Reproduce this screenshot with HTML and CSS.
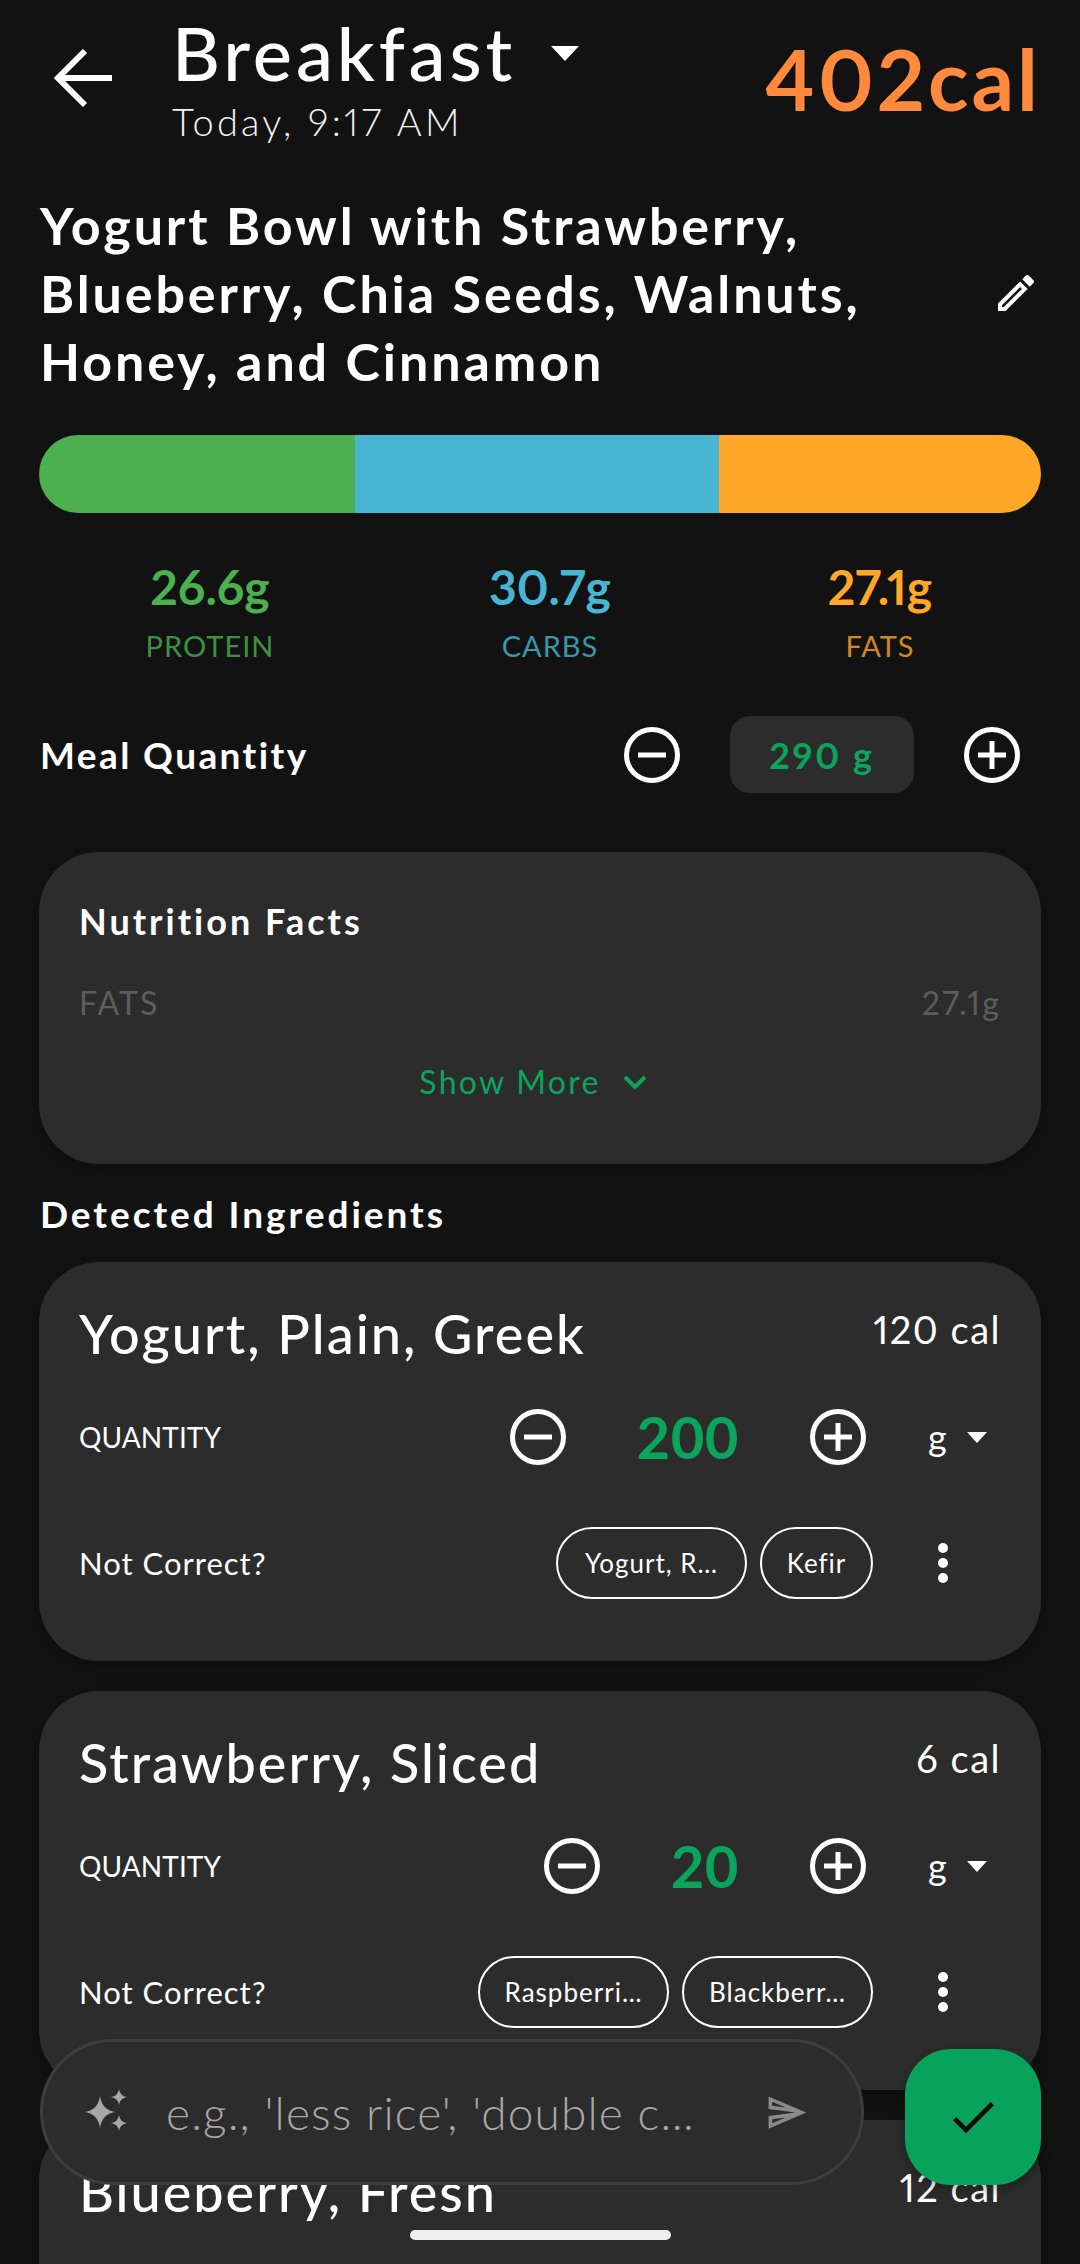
FILE: index.html
```html
<!DOCTYPE html>
<html lang="en">
<head>
<meta charset="utf-8">
<title>Breakfast</title>
<link rel="stylesheet" href="styles.css">
</head>
<body>
<main class="screen">
  <header class="header">
    <svg class="back" viewBox="0 0 60 60"><path d="M58 29H4M31 2L4 29l27 27"/></svg>
    <div class="meal-head">
      <div class="meal-line"><span class="meal-name">Breakfast</span><span class="caret caret-lg"></span></div>
      <div class="meal-time">Today, 9:17 AM</div>
    </div>
    <div class="meal-cal">402cal</div>
  </header>

  <section class="title-row">
    <h1 class="title">Yogurt Bowl with Strawberry,<br>Blueberry, Chia Seeds, Walnuts,<br>Honey, and Cinnamon</h1>
    <svg class="edit" viewBox="0 0 24 24"><path d="M14.06 9.02l.92.92L5.92 19H5v-.92l9.06-9.06M17.66 3c-.25 0-.51.1-.7.29l-1.83 1.83 3.75 3.75 1.83-1.83c.39-.39.39-1.02 0-1.41l-2.34-2.34c-.2-.2-.45-.29-.71-.29zm-3.6 3.19L3 17.25V21h3.75L17.81 9.94l-3.75-3.75z"/></svg>
  </section>

  <div class="macro-bar"><span class="seg seg-p"></span><span class="seg seg-c"></span><span class="seg seg-f"></span></div>

  <section class="stats">
    <div class="stat stat-p"><div class="stat-val">26.6g</div><div class="stat-lbl">PROTEIN</div></div>
    <div class="stat stat-c"><div class="stat-val">30.7g</div><div class="stat-lbl">CARBS</div></div>
    <div class="stat stat-f"><div class="stat-val">27.1g</div><div class="stat-lbl">FATS</div></div>
  </section>

  <section class="meal-qty">
    <div class="heading heading-meal">Meal Quantity</div>
    <div class="meal-stepper">
      <svg class="step" viewBox="0 0 56 56"><circle cx="28" cy="28" r="25.5"/><path d="M14 28h28"/></svg>
      <div class="qty-pill">290 g</div>
      <svg class="step" viewBox="0 0 56 56"><circle cx="28" cy="28" r="25.5"/><path d="M14 28h28M28 14v28"/></svg>
    </div>
  </section>

  <section class="card facts">
    <div class="facts-title">Nutrition Facts</div>
    <div class="facts-row"><span>FATS</span><span>27.1g</span></div>
    <div class="show-more"><span>Show More</span><svg class="chev" viewBox="0 0 24 16"><path d="M2 3l10 10L22 3"/></svg></div>
  </section>

  <h2 class="heading detected">Detected Ingredients</h2>

  <article class="card ing">
    <div class="ing-top"><div class="ing-name">Yogurt, Plain, Greek</div><div class="ing-cal">120 cal</div></div>
    <div class="ing-qty">
      <div class="qty-lbl">QUANTITY</div>
      <svg class="step" viewBox="0 0 56 56"><circle cx="28" cy="28" r="25.5"/><path d="M14 28h28"/></svg>
      <div class="qty-val">200</div>
      <svg class="step" viewBox="0 0 56 56"><circle cx="28" cy="28" r="25.5"/><path d="M14 28h28M28 14v28"/></svg>
      <div class="unit"><span>g</span><span class="caret"></span></div>
    </div>
    <div class="ing-alt">
      <div class="alt-lbl">Not Correct?</div>
      <div class="chip chip-a">Yogurt, R…</div>
      <div class="chip chip-b">Kefir</div>
      <svg class="dots" viewBox="0 0 12 40"><circle cx="6" cy="5" r="5"/><circle cx="6" cy="20" r="5"/><circle cx="6" cy="35" r="5"/></svg>
    </div>
  </article>

  <article class="card ing">
    <div class="ing-top"><div class="ing-name">Strawberry, Sliced</div><div class="ing-cal">6 cal</div></div>
    <div class="ing-qty">
      <div class="qty-lbl">QUANTITY</div>
      <svg class="step" viewBox="0 0 56 56"><circle cx="28" cy="28" r="25.5"/><path d="M14 28h28"/></svg>
      <div class="qty-val">20</div>
      <svg class="step" viewBox="0 0 56 56"><circle cx="28" cy="28" r="25.5"/><path d="M14 28h28M28 14v28"/></svg>
      <div class="unit"><span>g</span><span class="caret"></span></div>
    </div>
    <div class="ing-alt">
      <div class="alt-lbl">Not Correct?</div>
      <div class="chip chip-c">Raspberri…</div>
      <div class="chip chip-c">Blackberr…</div>
      <svg class="dots" viewBox="0 0 12 40"><circle cx="6" cy="5" r="5"/><circle cx="6" cy="20" r="5"/><circle cx="6" cy="35" r="5"/></svg>
    </div>
  </article>

  <article class="card ing">
    <div class="ing-top"><div class="ing-name">Blueberry, Fresh</div><div class="ing-cal">12 cal</div></div>
  </article>

  <div class="ask">
    <svg class="spark" viewBox="0 0 48 48"><path d="M18 8q2 14 15 16q-13 2-15 16q-2-14-15-16q13-2 15-16z"/><path d="M37 1q1 7 8 8q-7 1-8 8q-1-7-8-8q7-1 8-8z"/><path d="M37 27q1 7 8 8q-7 1-8 8q-1-7-8-8q7-1 8-8z"/></svg>
    <div class="ask-text">e.g., 'less rice', 'double c…</div>
    <svg class="send" viewBox="0 0 24 24"><path d="M4.01 6.03l7.51 3.22-7.52-1 .01-2.22m7.5 8.72L4 17.97v-2.22l7.51-1M2.01 3L2 10l15 2-15 2 .01 7L23 12 2.01 3z"/></svg>
  </div>
  <button class="fab" aria-label="Done"><svg class="check" viewBox="0 0 24 24"><path d="M9 16.17L4.83 12l-1.42 1.41L9 19 21 7l-1.41-1.41z"/></svg></button>
  <div class="home"></div>
</main>
</body>
</html>
```
FILE: styles.css
```css
* { box-sizing: border-box; }
html, body { margin: 0; padding: 0; background: #121212; }
body { font-family: "Lato", "Noto Sans", sans-serif; color: #fff; font-variant-numeric: proportional-nums; }
.screen { position: relative; width: 1080px; height: 2264px; overflow: hidden; background: #121212; }

.header { display: flex; align-items: flex-start; height: 190px; padding: 0 39px 0 54px; }
.back { width: 60px; height: 60px; margin-top: 49px; fill: none; stroke: #fff; stroke-width: 6; flex: none; }
.meal-head { margin-left: 58px; flex: 1; }
.meal-line { display: flex; align-items: center; height: 106px; }
.meal-name { font-size: 74px; font-weight: 500; letter-spacing: 3.9px; line-height: 1; }
.caret { display: inline-block; width: 0; height: 0; border-left: 10px solid transparent; border-right: 10px solid transparent; border-top: 11px solid #fff; }
.caret-lg { border-left-width: 14px; border-right-width: 14px; border-top-width: 15px; margin: 0 0 0 35px; }
.meal-time { font-size: 38px; font-weight: 300; letter-spacing: 3.2px; line-height: 48px; margin-top: -9px; color: #f2f2f2; }
.meal-cal { font-size: 84px; font-weight: 700; letter-spacing: 3px; color: #ff8a3d; line-height: 1; margin-top: 37px; }

.title-row { display: flex; align-items: center; justify-content: space-between; padding: 1px 40px 0 40px; height: 204px; }
.title { margin: 0; font-size: 52px; font-weight: 700; line-height: 68px; letter-spacing: 2.9px; }
.edit { width: 48px; height: 48px; fill: #fff; flex: none; }

.macro-bar { display: flex; height: 78px; margin: 41px 39px 0; border-radius: 39px; overflow: hidden; }
.seg { display: block; height: 100%; }
.seg-p { width: 316px; background: #4caf50; }
.seg-c { width: 364px; background: #48b6d3; }
.seg-f { flex: 1; background: #ffa726; }

.stats { position: relative; height: 160px; margin-top: 44px; display: grid; grid-template-columns: 420px 260px 400px; }
.stat { text-align: center; }
.stat-val { font-size: 48px; font-weight: 700; line-height: 60px; }
.stat-lbl { font-size: 29px; line-height: 36px; margin-top: 11px; opacity: .8; letter-spacing: 1px; }
.stat-p { color: #4caf50; }
.stat-c { color: #48b6d3; }
.stat-f { color: #ffa726; }

.meal-qty { display: flex; align-items: center; justify-content: space-between; height: 77px; margin-top: -1px; padding: 0 60px 0 40px; }
.heading { font-size: 37px; font-weight: 700; margin: 0; }
.heading-meal { letter-spacing: 2.4px; }
.meal-stepper { display: flex; align-items: center; gap: 50px; }
.step { width: 56px; height: 56px; fill: none; stroke: #fff; stroke-width: 5; flex: none; }
.qty-pill { width: 184px; height: 77px; border-radius: 20px; background: #2c2c2c; color: #0aa45c; font-size: 36px; font-weight: 700; letter-spacing: 2.6px; display: flex; align-items: center; justify-content: center; }

.card { margin: 0 39px; background: #2c2c2c; border-radius: 60px; padding: 0 40px; box-shadow: 0 6px 16px rgba(0,0,0,.3); }
.facts { margin-top: 59px; height: 312px; padding-top: 47px; }
.facts-title { font-size: 36px; font-weight: 700; letter-spacing: 3px; line-height: 44px; }
.facts-row { display: flex; justify-content: space-between; margin-top: 40px; font-size: 32px; line-height: 40px; color: #5d5d5d; letter-spacing: 2.2px; }
.show-more { display: flex; justify-content: center; align-items: center; gap: 22px; margin-top: 39px; padding-right: 14px; color: #0aa45c; font-size: 32px; line-height: 40px; letter-spacing: 2.3px; font-weight: 400; }
.chev { width: 24px; height: 16px; fill: none; stroke: #0aa45c; stroke-width: 4; }

.detected { margin: 28px 40px 0; height: 70px; line-height: 44px; letter-spacing: 2.95px; }

.ing { height: 399px; margin-bottom: 30px; }
.ing-top { display: flex; justify-content: space-between; align-items: flex-start; padding-top: 40px; height: 130px; }
.ing-name { font-size: 54px; font-weight: 500; line-height: 64px; letter-spacing: 2px; }
.ing-cal { font-size: 38px; line-height: 50px; font-weight: 400; letter-spacing: 1.5px; margin-top: 2px; }
.ing-qty { display: flex; align-items: center; height: 90px; gap: 71px; }
.qty-lbl { flex: 1; font-size: 28px; letter-spacing: .1px; }
.qty-val { font-size: 58px; font-weight: 700; letter-spacing: .5px; font-variant-numeric: tabular-nums; color: #0aa45c; line-height: 1; }
.unit { display: flex; align-items: center; justify-content: space-between; width: 135px; padding: 0 14px 0 62px; margin-left: -71px; font-size: 36px; }
.ing-alt { display: flex; align-items: center; height: 72px; margin-top: 45px; gap: 13px; }
.alt-lbl { flex: 1; font-size: 31px; letter-spacing: 1px; }
.chip { height: 72px; border: 2.5px solid #fff; border-radius: 36px; display: flex; align-items: center; justify-content: center; font-size: 26px; letter-spacing: 1px; }
.chip-a { width: 191px; }
.chip-b { width: 113px; }
.chip-c { width: 191px; }
.dots { width: 12px; height: 40px; fill: #fff; margin: 0 52px 0 51px; }

.ask { position: absolute; left: 40px; top: 2039px; width: 824px; height: 146px; border: 3px solid #3e3e3e; border-radius: 73px; background: #2c2c2c; display: flex; align-items: center; padding: 0 53px 0 39px; }
.spark { width: 48px; height: 48px; fill: #a8a8a8; flex: none; }
.ask-text { flex: 1; margin-left: 36px; font-size: 46px; font-weight: 300; color: #a8a8a8; letter-spacing: 1.15px; white-space: nowrap; }
.send { width: 43px; height: 43px; fill: #8a8a8a; flex: none; }
.fab { position: absolute; left: 905px; top: 2049px; width: 136px; height: 136px; border: 0; border-radius: 46px; background: #07a35a; display: flex; align-items: center; justify-content: center; padding: 0; box-shadow: 0 4px 12px rgba(0,0,0,.3); }
.check { width: 56px; height: 56px; fill: #0a0a0a; }
.home { position: absolute; left: 410px; top: 2230px; width: 261px; height: 10px; border-radius: 5px; background: #eee; }
```
